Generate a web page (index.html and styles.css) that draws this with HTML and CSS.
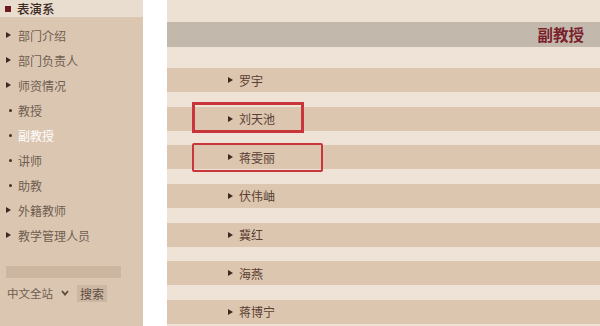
FILE: index.html
```html
<!DOCTYPE html>
<html lang="zh-CN">
<head>
<meta charset="utf-8">
<title>副教授</title>
<link rel="stylesheet" href="styles.css">
</head>
<body>
<div class="page">
  <aside class="sidebar">
    <div class="side-head"><span class="sq"></span>表演系</div>
    <ul class="side-list">
      <li class="arr">部门介绍</li>
      <li class="arr">部门负责人</li>
      <li class="arr">师资情况</li>
      <li class="dot">教授</li>
      <li class="dot active">副教授</li>
      <li class="dot">讲师</li>
      <li class="dot">助教</li>
      <li class="arr">外籍教师</li>
      <li class="arr">教学管理人员</li>
    </ul>
    <div class="search-input"></div>
    <div class="search-row">
      <span class="scope">中文全站</span>
      <svg class="chev" width="8" height="6" viewBox="0 0 8 6"><path d="M1 1 L4 4.5 L7 1" fill="none" stroke="#5a4a3c" stroke-width="1.8"/></svg>
      <span class="btn">搜索</span>
    </div>
  </aside>
  <main class="main">
    <div class="top-band"></div>
    <div class="title-bar"><h1>副教授</h1></div>
    <ul class="names">
      <li><span class="tri"></span>罗宇</li>
      <li><span class="tri"></span>刘天池</li>
      <li><span class="tri"></span>蒋雯丽</li>
      <li><span class="tri"></span>伏伟岫</li>
      <li><span class="tri"></span>冀红</li>
      <li><span class="tri"></span>海燕</li>
      <li><span class="tri"></span>蒋博宁</li>
    </ul>
  </main>
  <div class="mark mark1"></div>
  <div class="mark mark2"></div>
</div>
</body>
</html>
```
FILE: styles.css
```css
* { box-sizing: border-box; }
html, body { margin: 0; padding: 0; background: #ffffff; }
body {
  font-family: "Noto Sans CJK SC", "Noto Sans", sans-serif;
  width: 600px;
  height: 326px;
  overflow: hidden;
}
.page {
  position: relative;
  display: flex;
  gap: 24px;
  height: 326px;
}
.sidebar {
  width: 143px;
  flex: 0 0 143px;
  background: #dbc6b2;
  height: 326px;
}
.side-head {
  height: 17px;
  background: #e9ddcf;
  display: flex;
  align-items: center;
  padding-left: 5px;
  font-size: 12.5px;
  color: #3a2a22;
  font-weight: 500;
  line-height: 17px;
}
.sq {
  width: 6px;
  height: 6px;
  background: #6e1a1e;
  margin-right: 6px;
}
.side-list {
  list-style: none;
  margin: 0;
  padding: 6px 0 0 0;
}
.side-list li {
  position: relative;
  height: 25px;
  line-height: 25px;
  padding-left: 18px;
  font-size: 12px;
  color: #6f5e50;
}
.side-list li.arr::before {
  content: "";
  position: absolute;
  left: 6px;
  top: 9px;
  border-left: 5px solid #3e2a1e;
  border-top: 3.5px solid transparent;
  border-bottom: 3.5px solid transparent;
}
.side-list li.dot::before {
  content: "";
  position: absolute;
  left: 9px;
  top: 11px;
  width: 3px;
  height: 3px;
  border-radius: 50%;
  background: #4a3024;
}
.side-list li.active { color: #ffffff; }
.search-input {
  margin: 18px 0 0 6px;
  width: 115px;
  height: 12px;
  background: #cdb6a0;
}
.search-row {
  display: flex;
  align-items: center;
  margin: 6px 0 0 7px;
  height: 18px;
  font-size: 11.5px;
  color: #6f5e50;
}
.chev { margin-left: 8px; }
.btn {
  margin-left: 8px;
  background: #cbb7a3;
  padding: 0 3px;
  height: 17px;
  line-height: 17px;
  color: #5e4e42;
  font-size: 12px;
}
.main {
  flex: 1;
  background: #eee3d6;
  height: 326px;
}
.top-band {
  height: 22px;
  background: #ece1d3;
}
.title-bar {
  height: 25px;
  background: #c2b8ac;
  display: flex;
  align-items: center;
  justify-content: flex-end;
  padding-right: 16px;
}
.title-bar h1 {
  margin: 0;
  font-size: 15.5px;
  font-weight: 700;
  color: #7a1f2c;
  line-height: 25px;
}
.names {
  list-style: none;
  margin: 0;
  padding: 21px 0 0 0;
  display: flex;
  flex-direction: column;
  gap: 14.67px;
}
.names li {
  height: 24px;
  background: #dcc6b0;
  display: flex;
  align-items: center;
  padding-left: 61px;
  font-size: 12px;
  color: #5a3e32;
}
.tri {
  width: 0;
  height: 0;
  border-left: 5px solid #3e2a1e;
  border-top: 3.5px solid transparent;
  border-bottom: 3.5px solid transparent;
  margin-right: 6px;
}
.mark {
  position: absolute;
  border: 3px solid #c8353a;
}
.mark1 { left: 192px; top: 102px; width: 112px; height: 31px; }
.mark2 { left: 192px; top: 143px; width: 131px; height: 29px; border-width: 2px; border-radius: 2px; }
```
